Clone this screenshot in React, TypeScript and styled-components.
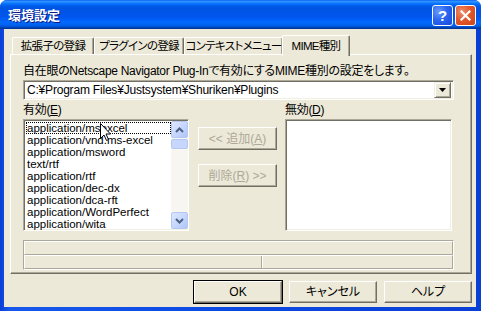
import React from 'react'
import styled, { createGlobalStyle } from 'styled-components'

const font = `"Liberation Sans", "Noto Sans CJK JP", sans-serif`

const GlobalStyle = createGlobalStyle`
  html, body { margin: 0; padding: 0; background: #fff; }
  body {
    font-family: ${font};
    font-size: 12px;
    font-feature-settings: "palt";
  }
`

const mimeTypes = [
    'application/msexcel',
    'application/vnd.ms-excel',
    'application/msword',
    'text/rtf',
    'application/rtf',
    'application/dec-dx',
    'application/dca-rft',
    'application/WordPerfect',
    'application/wita',
]

function App() {
    return (
        <Window>
            <GlobalStyle />
            <TitleBar>
                <Title>環境設定</Title>
                <TitleButton kind="help">?</TitleButton>
                <TitleButton kind="close">
                    <svg width="11" height="11" viewBox="0 0 11 11">
                        <path d="M1.5 1.5 L9.5 9.5 M9.5 1.5 L1.5 9.5" stroke="#fff" strokeWidth="2.2" strokeLinecap="square" />
                    </svg>
                </TitleButton>
            </TitleBar>

            <Body>
                <TabRow>
                    <Tab w={82}>拡張子の登録</Tab>
                    <Tab w={90}>プラグインの登録</Tab>
                    <Tab w={99}>コンテキストメニュー</Tab>
                    <Tab w={68} active>MIME種別</Tab>
                </TabRow>

                <Panel>
                    <Label>自在眼のNetscape Navigator Plug-Inで有効にするMIME種別の設定をします。</Label>
                    <Combo>
                        <ComboText>C:¥Program Files¥Justsystem¥Shuriken¥Plugins</ComboText>
                        <DropButton>
                            <svg width="7" height="4" viewBox="0 0 7 4">
                                <path d="M0 0 H7 L3.5 4 Z" fill="#000" />
                            </svg>
                        </DropButton>
                    </Combo>

                    <ListGrid>
                        <Label>有効(<u>E</u>)</Label>
                        <span />
                        <Label>無効(<u>D</u>)</Label>

                        <ListBox>
                            <Items>
                                {mimeTypes.map((t, i) => (
                                    <Item key={t} focused={i === 0}>{t}</Item>
                                ))}
                            </Items>
                            <ScrollBar>
                                <ScrollButton>
                                    <svg width="9" height="6" viewBox="0 0 9 6">
                                        <path d="M1 5 L4.5 1.5 L8 5" stroke="#4d6185" strokeWidth="2" fill="none" />
                                    </svg>
                                </ScrollButton>
                                <Thumb />
                                <Track />
                                <ScrollButton>
                                    <svg width="9" height="6" viewBox="0 0 9 6">
                                        <path d="M1 1 L4.5 4.5 L8 1" stroke="#4d6185" strokeWidth="2" fill="none" />
                                    </svg>
                                </ScrollButton>
                            </ScrollBar>
                            <Cursor width="12" height="19" viewBox="0 0 12 19">
                                <path d="M0.5 0.5 V15.5 L4 12 L6.5 17.5 L8.5 16.5 L6 11 H10.5 Z" fill="#fff" stroke="#000" strokeWidth="1" />
                            </Cursor>
                        </ListBox>

                        <MoveButtons>
                            <PushButton disabled>&lt;&lt; 追加(<u>A</u>)</PushButton>
                            <PushButton disabled>削除(<u>R</u>) &gt;&gt;</PushButton>
                        </MoveButtons>

                        <ListBox />
                    </ListGrid>

                    <StatusFrame>
                        <StatusRow />
                        <StatusRow>
                            <StatusCell w={236} />
                            <StatusCell />
                        </StatusRow>
                    </StatusFrame>
                </Panel>

                <Footer>
                    <PushButton isDefault>OK</PushButton>
                    <PushButton>キャンセル</PushButton>
                    <PushButton>ヘルプ</PushButton>
                </Footer>
            </Body>
        </Window>
    )
}

export default App

export const Window = styled.div`
  width: 481px;
  height: 311px;
  display: flex;
  flex-direction: column;
  background: linear-gradient(90deg, #0a3fd6 0%, #1658ec 2%, #0b48e2 50%, #0a3fd6 100%);
  border-radius: 7px 7px 0 0;
  overflow: hidden;
  box-sizing: border-box;
`

export const TitleBar = styled.div`
  height: 29px;
  flex: none;
  display: flex;
  align-items: flex-start;
  gap: 2px;
  padding: 5px 5px 0 8px;
  box-sizing: border-box;
  background: linear-gradient(#0058ee 0%, #3593ff 4%, #288eff 7%, #127dff 10%, #036ffc 14%, #0262ee 18%, #0057e5 24%, #0054e3 30%, #0055eb 56%, #005bf5 66%, #026afe 76%, #0062ef 86%, #0052d6 92%, #0040ab 96%, #003092 100%);
`

export const Title = styled.div`
  flex: 1;
  color: #fff;
  font-weight: bold;
  font-size: 13px;
  line-height: 21px;
  text-shadow: 1px 1px #0a1883;
`

export const TitleButton = styled.div<{ kind: 'help' | 'close' }>`
  width: 21px;
  height: 21px;
  box-sizing: border-box;
  border: 1px solid #fff;
  border-radius: 3px;
  display: flex;
  align-items: center;
  justify-content: center;
  color: #fff;
  font-family: "Liberation Sans", sans-serif;
  font-weight: bold;
  font-size: 15px;
  line-height: 1;
  background: ${p => p.kind === 'close'
        ? 'radial-gradient(circle at 30% 30%, #f0906a 0%, #e2582d 45%, #cc4418 100%)'
        : 'radial-gradient(circle at 30% 30%, #6a9cff 0%, #2a66f0 45%, #1648d8 100%)'};
`

export const Body = styled.div`
  flex: 1;
  margin: 0 5px 4px 4px;
  padding: 6px 4px 0 6px;
  background: #ece9d8;
  display: flex;
  flex-direction: column;
`

export const TabRow = styled.div`
  display: flex;
  align-items: flex-end;
  height: 19px;
  padding-left: 2px;
  position: relative;
  z-index: 1;
`

export const Tab = styled.div<{ w: number; active?: boolean }>`
  width: ${p => p.w}px;
  box-sizing: border-box;
  height: ${p => (p.active ? 21 : 17)}px;
  margin-bottom: ${p => (p.active ? -2 : 0)}px;
  margin-left: ${p => (p.active ? -1 : 0)}px;
  padding-top: ${p => (p.active ? 3 : 1)}px;
  background: #ece9d8;
  border-top: 1px solid #fff;
  border-left: 1px solid #fff;
  border-right: 1px solid #716f64;
  box-shadow: inset -1px 0 #aca899;
  border-radius: 2px 2px 0 0;
  display: flex;
  justify-content: center;
  font-size: 11.5px;
  letter-spacing: -0.7px;
  line-height: 14px;
  white-space: nowrap;
  color: #000;
`

export const Panel = styled.div`
  height: 220px;
  box-sizing: border-box;
  border-top: 1px solid #fff;
  border-left: 1px solid #fff;
  border-right: 1px solid #716f64;
  border-bottom: 1px solid #716f64;
  box-shadow: inset -1px -1px #aca899;
  padding: 9px 17px 0 12px;
  display: flex;
  flex-direction: column;
`

export const Label = styled.div`
  font-size: 12px;
  line-height: 14px;
  height: 14px;
  letter-spacing: -0.3px;
  white-space: nowrap;
  color: #000;
`

const sunken = `
  border-top: 1px solid #aca899;
  border-left: 1px solid #aca899;
  border-right: 1px solid #fff;
  border-bottom: 1px solid #fff;
  box-shadow: inset 1px 1px #716f64, inset -1px -1px #f1efe2;
`

export const Combo = styled.div`
  margin-top: 2px;
  height: 20px;
  box-sizing: border-box;
  ${sunken}
  background: #fff;
  display: flex;
  align-items: center;
  padding: 2px 2px 2px 3px;
`

export const ComboText = styled.div`
  flex: 1;
  font-size: 12px;
  line-height: 14px;
  letter-spacing: -0.2px;
`

export const DropButton = styled.div`
  width: 17px;
  height: 16px;
  box-sizing: border-box;
  background: #ece9d8;
  border-top: 1px solid #f1efe2;
  border-left: 1px solid #f1efe2;
  border-right: 1px solid #716f64;
  border-bottom: 1px solid #716f64;
  box-shadow: inset 1px 1px #fff, inset -1px -1px #aca899;
  display: flex;
  align-items: center;
  justify-content: center;
`

export const ListGrid = styled.div`
  display: grid;
  grid-template-columns: 166px 96px 167px;
  grid-template-rows: 14px 112px;
  row-gap: 2px;
  margin-top: 3px;
`

export const ListBox = styled.div`
  position: relative;
  box-sizing: border-box;
  ${sunken}
  background: #fff;
  display: flex;
  padding: 2px 0 2px 2px;
`

export const Items = styled.div`
  flex: 1;
`

export const Item = styled.div<{ focused?: boolean }>`
  height: 12px;
  line-height: 12px;
  padding-left: 1px;
  font-size: 11.5px;
  white-space: nowrap;
  outline: ${p => (p.focused ? '1px dotted #000' : 'none')};
  outline-offset: -1px;
`

export const ScrollBar = styled.div`
  width: 17px;
  margin-top: -1px;
  margin-bottom: -1px;
  display: flex;
  flex-direction: column;
  background: #f7f6f1;
`

export const ScrollButton = styled.div`
  height: 17px;
  box-sizing: border-box;
  border: 1px solid #b4c8f6;
  border-radius: 2px;
  background: linear-gradient(135deg, #dde7fe 0%, #c3d4fd 60%, #b0c4f5 100%);
  display: flex;
  align-items: center;
  justify-content: center;
`

export const Thumb = styled.div`
  height: 8px;
  margin-top: 1px;
  border: 1px solid #b4c8f6;
  border-radius: 2px;
  background: #c6d6fc;
`

export const Track = styled.div`
  flex: 1;
`

export const Cursor = styled.svg`
  position: absolute;
  left: 76px;
  top: 3px;
`

export const MoveButtons = styled.div`
  display: flex;
  flex-direction: column;
  gap: 14px;
  padding: 8px 0 0 9px;
`

export const PushButton = styled.button<{ isDefault?: boolean }>`
  width: 88px;
  height: 22px;
  box-sizing: border-box;
  padding: 0;
  font-family: ${font};
  font-feature-settings: "palt";
  font-size: 12px;
  line-height: 14px;
  color: #000;
  background: #ece9d8;
  border-top: 1px solid #fff;
  border-left: 1px solid #fff;
  border-right: 1px solid #716f64;
  border-bottom: 1px solid #716f64;
  box-shadow: inset -1px -1px #aca899;
  outline: ${p => (p.isDefault ? '1px solid #000' : 'none')};
  outline-offset: 0;

  &:disabled {
    width: 79px;
    height: 23px;
    color: #aca899;
  }
`

export const StatusFrame = styled.div`
  margin-top: 9px;
  height: 30px;
  box-sizing: border-box;
  border-top: 1px solid #aca899;
  border-left: 1px solid #aca899;
  border-right: 1px solid #fff;
  border-bottom: 1px solid #fff;
  display: flex;
  flex-direction: column;
`

export const StatusRow = styled.div`
  flex: 1;
  display: flex;
  border-top: 1px solid #fff;
  border-left: 1px solid #fff;
  border-right: 1px solid #aca899;
  border-bottom: 1px solid #aca899;
`

export const StatusCell = styled.div<{ w?: number }>`
  ${p => (p.w ? `width: ${p.w}px;` : 'flex: 1;')}
  border-right: ${p => (p.w ? '1px solid #aca899' : 'none')};
  box-shadow: ${p => (p.w ? '1px 0 #fff' : 'none')};
`

export const Footer = styled.div`
  display: flex;
  justify-content: flex-end;
  gap: 7px;
  margin-top: 7px;
`
